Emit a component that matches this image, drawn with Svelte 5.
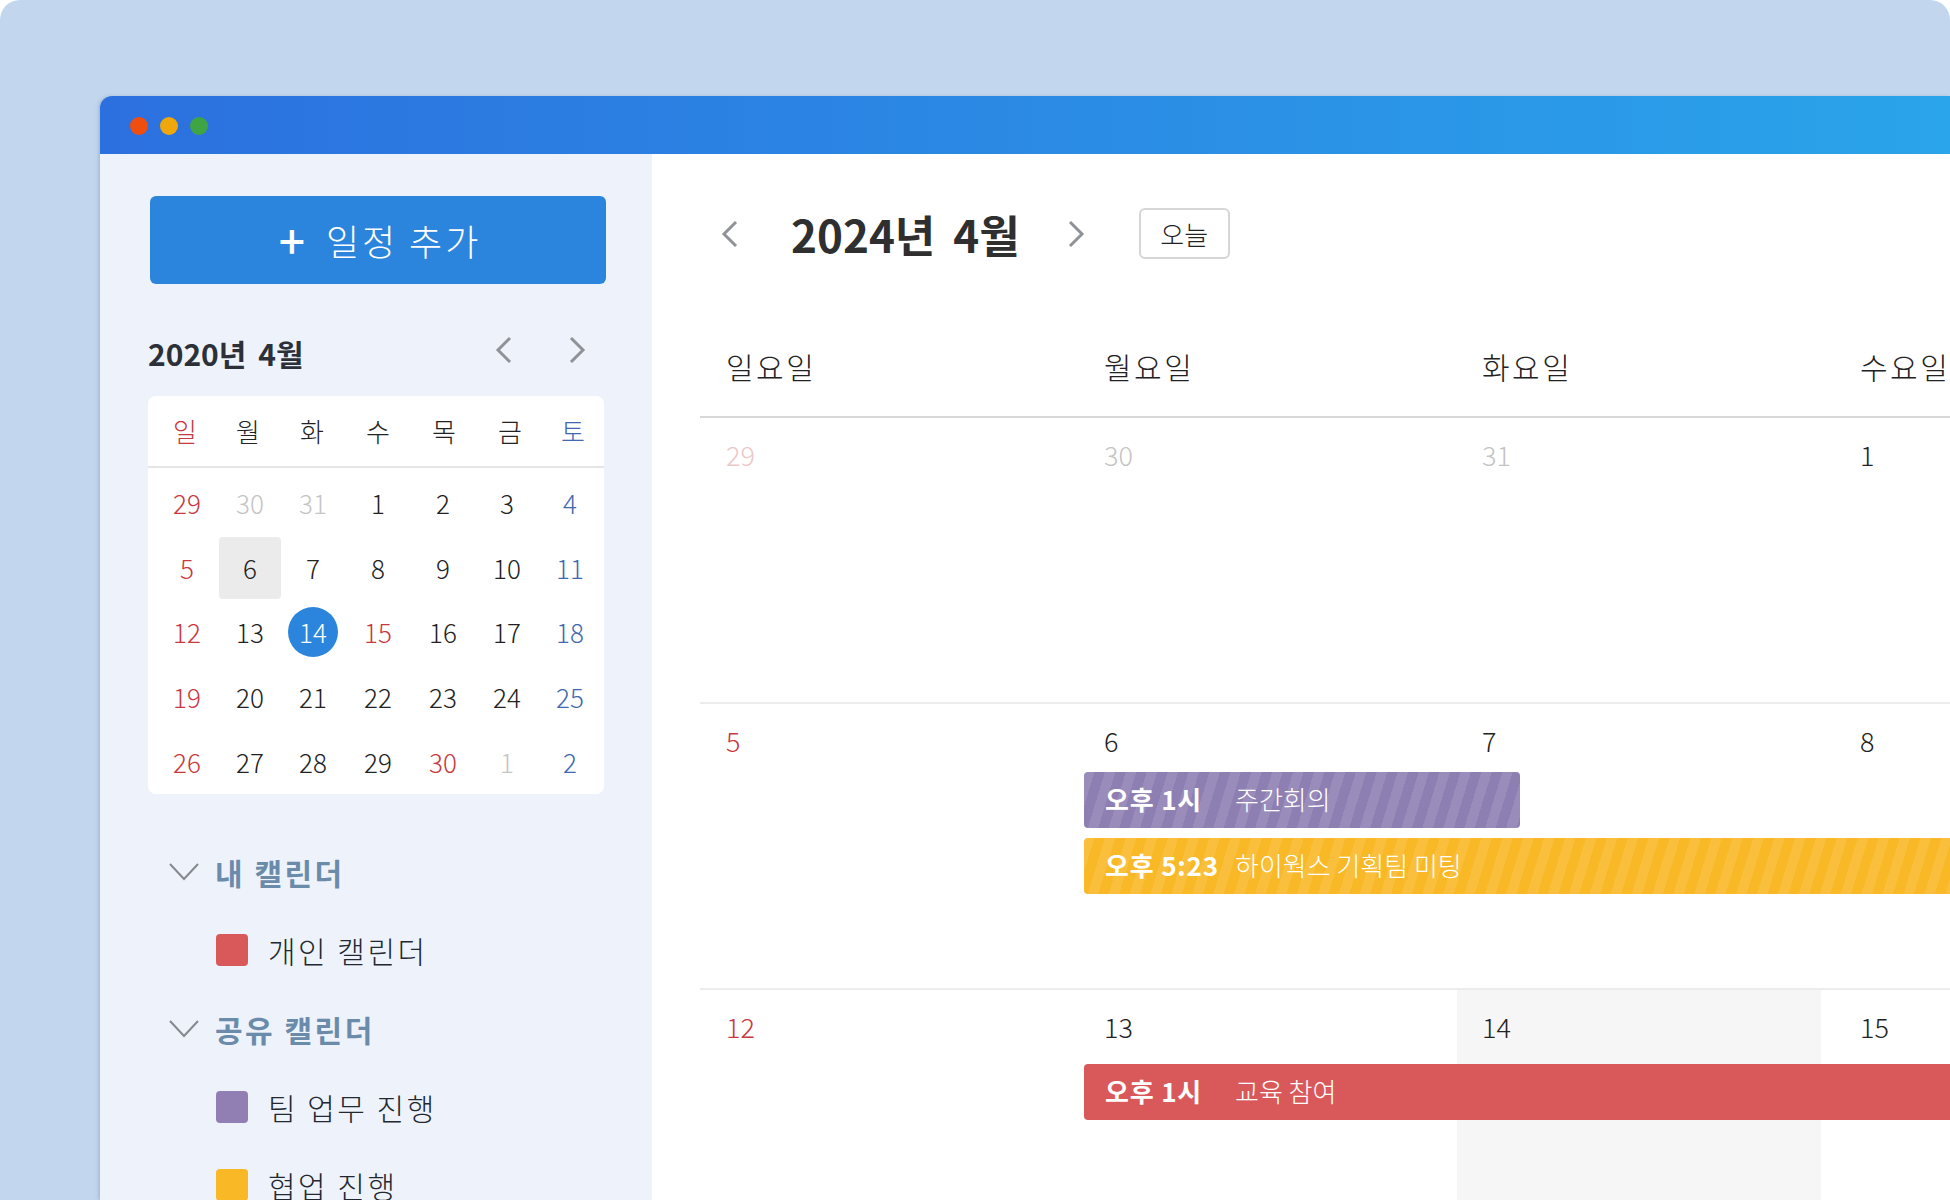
<script lang="ts">
	const dows = [
		{ label: '일', tone: 'sun' },
		{ label: '월', tone: '' },
		{ label: '화', tone: '' },
		{ label: '수', tone: '' },
		{ label: '목', tone: '' },
		{ label: '금', tone: '' },
		{ label: '토', tone: 'sat' }
	];

	const miniDays = [
		['29', 'sun'], ['30', 'off'], ['31', 'off'], ['1', ''], ['2', ''], ['3', ''], ['4', 'sat'],
		['5', 'sun'], ['6', 'hover'], ['7', ''], ['8', ''], ['9', ''], ['10', ''], ['11', 'sat'],
		['12', 'sun'], ['13', ''], ['14', 'today'], ['15', 'sun'], ['16', ''], ['17', ''], ['18', 'sat'],
		['19', 'sun'], ['20', ''], ['21', ''], ['22', ''], ['23', ''], ['24', ''], ['25', 'sat'],
		['26', 'sun'], ['27', ''], ['28', ''], ['29', ''], ['30', 'sun'], ['1', 'off'], ['2', 'sat']
	];

	const weekNames = ['일요일', '월요일', '화요일', '수요일'];

	const calendarGroups = [
		{ title: '내 캘린더', items: [{ name: '개인 캘린더', color: '#d9595a' }] },
		{
			title: '공유 캘린더',
			items: [
				{ name: '팀 업무 진행', color: '#917eb2' },
				{ name: '협업 진행', color: '#f9b826' }
			]
		}
	];
</script>

{#snippet chevron(dir: string)}
	<svg class="chevron" viewBox="0 0 18 28" aria-hidden="true">
		{#if dir === 'left'}
			<path d="M15 2 L3 14 L15 26" />
		{:else}
			<path d="M3 2 L15 14 L3 26" />
		{/if}
	</svg>
{/snippet}

<div class="stage">
	<div class="window">
		<div class="titlebar">
			<span class="dot red"></span>
			<span class="dot yellow"></span>
			<span class="dot green"></span>
		</div>

		<div class="body">
			<aside class="sidebar">
				<button class="add-btn"><span class="plus">+</span>일정 추가</button>

				<div class="mini-head">
					<h3>2020년 4월</h3>
					<div class="mini-arrows">
						{@render chevron('left')}
						{@render chevron('right')}
					</div>
				</div>

				<div class="mini-card">
					<div class="mini-dows">
						{#each dows as d}
							<span class={d.tone}>{d.label}</span>
						{/each}
					</div>
					<div class="mini-grid">
						{#each miniDays as [num, tone]}
							<span class="mini-day {tone}"><span class="num">{num}</span></span>
						{/each}
					</div>
				</div>

				<div class="groups">
					{#each calendarGroups as group}
						<div class="group">
							<div class="group-title">
								<svg class="caret" viewBox="0 0 30 18" aria-hidden="true"><path d="M1 1 L15 16 L29 1" /></svg>
								<span>{group.title}</span>
							</div>
							{#each group.items as item}
								<div class="cal-item">
									<span class="swatch" style="background: {item.color}"></span>
									<span>{item.name}</span>
								</div>
							{/each}
						</div>
					{/each}
				</div>
			</aside>

			<main class="main">
				<header class="toolbar">
					<span class="nav-left">{@render chevron('left')}</span>
					<h1>2024년 4월</h1>
					<span class="nav-right">{@render chevron('right')}</span>
					<button class="today-btn">오늘</button>
				</header>

				<div class="week-head">
					{#each weekNames as name}
						<span>{name}</span>
					{/each}
				</div>

				<div class="week">
					<span class="date c1 faded">29</span>
					<span class="date c2 off">30</span>
					<span class="date c3 off">31</span>
					<span class="date c4">1</span>
				</div>

				<div class="week">
					<span class="date c1 sun">5</span>
					<span class="date c2">6</span>
					<span class="date c3">7</span>
					<span class="date c4">8</span>
					<div class="event purple striped short">
						<b>오후 1시</b><span>주간회의</span>
					</div>
					<div class="event yellow striped long">
						<b>오후 5:23</b><span>하이웍스 기획팀 미팅</span>
					</div>
				</div>

				<div class="week last">
					<span class="today-col"></span>
					<span class="date c1 sun">12</span>
					<span class="date c2">13</span>
					<span class="date c3">14</span>
					<span class="date c4">15</span>
					<div class="event red long">
						<b>오후 1시</b><span>교육 참여</span>
					</div>
				</div>
			</main>
		</div>
	</div>
</div>

<style>
	:global(body) {
		background: #fff;
		font-family: 'Noto Sans CJK KR', sans-serif;
	}

	.stage {
		width: 1950px;
		height: 1200px;
		box-sizing: border-box;
		padding: 96px 0 0 100px;
		background: #c2d6ee;
		border-radius: 20px 20px 0 0;
		overflow: hidden;
	}

	.window {
		width: 1850px;
		height: 1104px;
		border-radius: 12px 0 0 0;
		overflow: hidden;
		box-shadow: -2px 0 3px rgba(90, 120, 160, 0.25);
	}

	.titlebar {
		height: 58px;
		box-sizing: border-box;
		padding: 2px 0 0 30px;
		display: flex;
		align-items: center;
		gap: 12px;
		background: linear-gradient(90deg, #2c70df, #2aa4ea);
	}

	.dot {
		width: 18px;
		height: 18px;
		border-radius: 50%;
	}
	.red { background: #f04e0e; }
	.yellow { background: #efa70b; }
	.green { background: #3fa544; }

	.body {
		display: flex;
		height: 1046px;
	}

	.sidebar {
		width: 552px;
		flex: none;
		box-sizing: border-box;
		padding: 42px 46px 0 48px;
		background: #eef3fb;
	}

	.add-btn {
		display: flex;
		align-items: center;
		justify-content: center;
		width: 456px;
		height: 88px;
		margin-left: 2px;
		padding: 0 0 0 4px;
		border: 0;
		border-radius: 6px;
		background: #2b85dc;
		color: #fff;
		font-family: inherit;
		font-size: 36px;
		font-weight: 300;
		letter-spacing: 3px;
	}

	.plus {
		font-size: 46px;
		font-weight: 500;
		line-height: 1;
		margin: -3px 18px 0 0;
	}

	.mini-head {
		display: flex;
		align-items: center;
		justify-content: space-between;
		margin-top: 49px;
		height: 40px;
		padding: 0 20px 0 0;
	}

	.mini-head h3 {
		margin: 0;
		font-size: 30px;
		font-weight: 700;
		word-spacing: 5px;
		color: #2c3038;
	}

	.mini-arrows {
		display: flex;
		gap: 55px;
		margin-top: -7px;
	}

	.chevron {
		display: block;
		width: 18px;
		height: 28px;
		fill: none;
		stroke: #8f9296;
		stroke-width: 3;
	}

	.mini-card {
		width: 456px;
		height: 398px;
		margin-top: 23px;
		background: #fff;
		border-radius: 8px;
	}

	.mini-dows {
		display: grid;
		grid-template-columns: 64px 62px 66px 66px 66px 66px 60px;
		box-sizing: border-box;
		padding: 0 0 2px 5px;
		height: 72px;
		align-items: center;
		border-bottom: 2px solid #e6e6e8;
		font-size: 26px;
		font-weight: 300;
		color: #222;
	}

	.mini-dows span {
		text-align: center;
	}

	.mini-grid {
		display: grid;
		grid-template-columns: 64px 62px 64px 66px 64px 64px 62px;
		grid-auto-rows: 64.6px;
		padding: 3px 0 0 7px;
		font-size: 26px;
		font-weight: 300;
		color: #222;
	}

	.mini-day {
		display: flex;
		align-items: center;
		justify-content: center;
	}

	.num {
		display: flex;
		align-items: center;
		justify-content: center;
		line-height: 1;
	}

	.sun { color: #c8383f; }
	.sat { color: #4169ae; }
	.off { color: #c4c4c4; }

	.mini-day.hover .num {
		width: 62px;
		height: 62px;
		border-radius: 4px;
		background: #ebebeb;
	}

	.mini-day.today .num {
		width: 50px;
		height: 50px;
		border-radius: 50%;
		background: #2b85dc;
		color: #fff;
	}

	.groups {
		margin: 54px 0 0 21px;
	}

	.group + .group {
		margin-top: 31px;
	}

	.group-title {
		display: flex;
		align-items: center;
		height: 48px;
		color: #6b8bab;
		font-size: 30px;
		font-weight: 700;
		letter-spacing: 2.5px;
	}

	.caret {
		width: 30px;
		height: 18px;
		margin-right: 16px;
		fill: none;
		stroke: #85898d;
		stroke-width: 2;
	}

	.cal-item {
		display: flex;
		align-items: center;
		height: 48px;
		margin: 30px 0 0 47px;
		font-size: 30px;
		font-weight: 300;
		letter-spacing: 2.5px;
		color: #222831;
	}

	.swatch {
		width: 32px;
		height: 32px;
		margin-right: 20px;
		border-radius: 4px;
	}

	.main {
		flex: 1;
		min-width: 0;
		padding-left: 48px;
		background: #fff;
	}

	.toolbar {
		display: flex;
		align-items: center;
		height: 51px;
		margin-top: 54px;
	}

	.nav-left { margin-left: 21px; }

	.toolbar h1 {
		margin: 0 47px 0 52px;
		font-size: 44px;
		font-weight: 700;
		word-spacing: 8px;
		color: #2f2f2f;
		white-space: nowrap;
	}

	.today-btn {
		margin-left: 54px;
		width: 91px;
		height: 51px;
		box-sizing: border-box;
		background: #fff;
		border: 2px solid #d6d6d6;
		border-radius: 6px;
		font-family: inherit;
		font-size: 26px;
		font-weight: 300;
		color: #222;
	}

	.week-head {
		display: grid;
		grid-template-columns: repeat(4, 378px);
		align-items: center;
		box-sizing: border-box;
		height: 104px;
		padding-top: 2px;
		margin-top: 55px;
		border-bottom: 2px solid #d8d8d8;
		font-size: 30px;
		font-weight: 300;
		letter-spacing: 2.5px;
		color: #222;
		white-space: nowrap;
	}

	.week-head span {
		padding-left: 26px;
	}

	.week {
		display: grid;
		grid-template-columns: repeat(4, 378px);
		grid-template-rows: 68px;
		grid-auto-rows: 66px;
		height: 284px;
		border-bottom: 2px solid #ececec;
	}

	.date {
		grid-row: 1;
		padding: 18px 0 0 26px;
		font-size: 27px;
		font-weight: 300;
		line-height: 38px;
		color: #222;
	}

	.c1 { grid-column: 1; }
	.c2 { grid-column: 2; }
	.c3 { grid-column: 3; }
	.c4 { grid-column: 4; }

	.date.sun { color: #c8383f; }
	.date.off { color: #c4c4c4; }
	.date.faded { color: #ecc6c8; }

	.today-col {
		grid-column: 3;
		grid-row: 1 / 5;
		width: 364px;
		margin-left: 1px;
		background: #f6f6f6;
	}

	.event {
		display: flex;
		align-items: center;
		height: 56px;
		box-sizing: border-box;
		padding: 0 0 3px 21px;
		margin-left: 6px;
		border-radius: 4px 0 0 4px;
		color: #fff;
		font-size: 26px;
		font-weight: 300;
		white-space: nowrap;
	}

	.event b {
		width: 130px;
		flex: none;
		font-weight: 700;
		letter-spacing: 0.8px;
	}

	.short {
		grid-column: 2;
		grid-row: 2;
		width: 436px;
		border-radius: 4px;
	}

	.long {
		grid-column: 2 / span 3;
		width: 866px;
	}

	.last .event {
		grid-row: 2;
		margin-top: 6px;
	}

	.event.purple { background-color: #8e7fb3; }
	.event.yellow { background-color: #f9b826; }
	.event.red { background-color: #d9595a; }

	.striped {
		background-image: repeating-linear-gradient(
			107deg,
			rgba(255, 255, 255, 0.1) 0 10px,
			transparent 10px 20px
		);
	}
</style>
